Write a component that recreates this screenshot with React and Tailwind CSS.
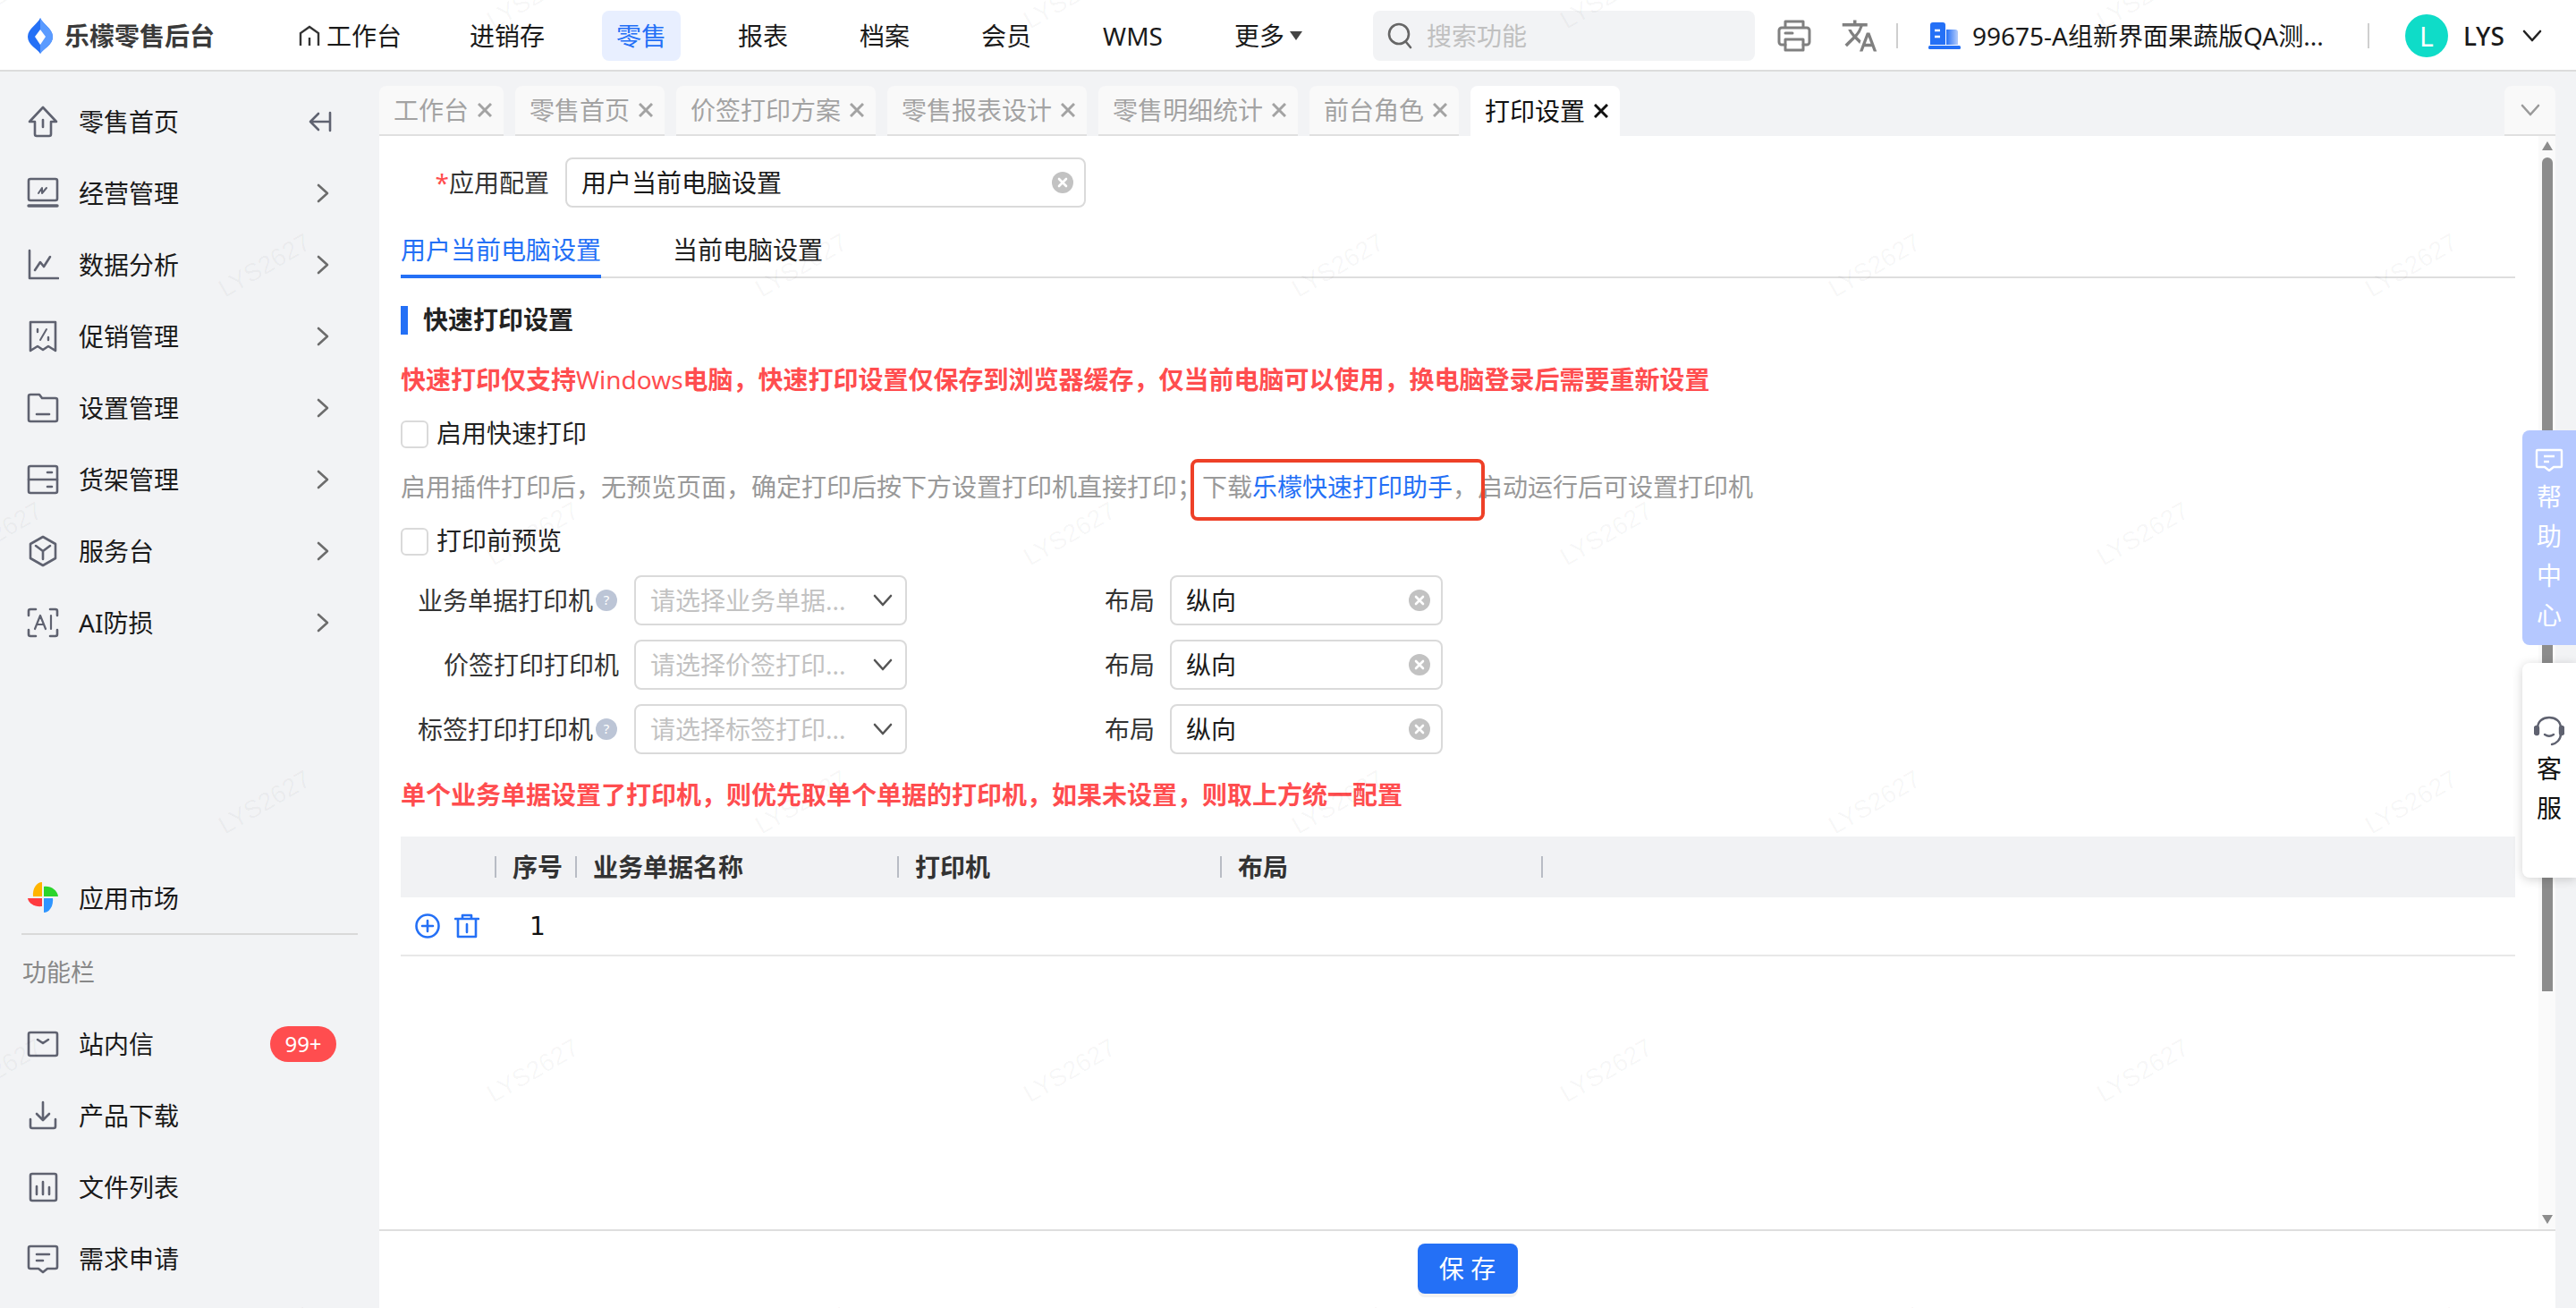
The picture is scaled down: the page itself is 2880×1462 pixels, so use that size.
import { MdTranslate } from 'react-icons/md'

const navItems = ['进销存', '零售', '报表', '档案', '会员', 'WMS']
const tabs = ['工作台', '零售首页', '价签打印方案', '零售报表设计', '零售明细统计', '前台角色']
const stroke = { fill: 'none', stroke: 'currentColor', strokeWidth: 2.6, strokeLinecap: 'round', strokeLinejoin: 'round' }

function Svg({ children, size = 36, className = 'text-[#5f6270]' }) {
  return (
    <svg width={size} height={size} viewBox="0 0 36 36" className={`shrink-0 ${className}`} {...stroke}>
      {children}
    </svg>
  )
}

const menuTop = [
  ['经营管理', <><rect x="2" y="2" width="32" height="24" rx="2" /><path d="M2 32h32" strokeWidth="3.4" /><path d="M13 18l4-6v6l5-6" strokeWidth="2" /></>],
  ['数据分析', <><path d="M3 2v31h32" /><path d="M9 24l6-9 4 5 7-11" /></>],
  ['促销管理', <><path d="M4 2h28v32l-8-5-6 4-6-4-8 5z" /><path d="M22 10l-7 12" strokeWidth="2" /><path d="M12 10v3M24 19v3" strokeWidth="2.4" /></>],
  ['设置管理', <><path d="M2 5a2 2 0 0 1 2-2h10l3 4h15a2 2 0 0 1 2 2v22a2 2 0 0 1-2 2H4a2 2 0 0 1-2-2z" /><path d="M11 25h14" /></>],
  ['货架管理', <><rect x="2" y="3" width="32" height="30" rx="2" /><path d="M2 18h32M23 10h5M23 26h5" /></>],
  ['服务台', <><path d="M18 2l14 8v16l-14 8-14-8V10z" /><path d="M10 12l8 6 8-6M18 18v9" /></>],
  ['AI防损', <><path d="M10 3H4a2 2 0 0 0-2 2v5M26 3h6a2 2 0 0 1 2 2v5M10 33H4a2 2 0 0 1-2-2v-5M26 33h6a2 2 0 0 0 2-2v-5" /><path d="M9 25l6-15 6 15M11 20h8M27 10v15" strokeWidth="2.2" /></>],
]

const menuBottom = [
  ['站内信', <><rect x="2" y="5" width="32" height="26" rx="2" /><path d="M12 13l6 4 6-4" /></>],
  ['产品下载', <><path d="M18 3v19M11 16l7 7 7-7" /><path d="M4 22v8a2 2 0 0 0 2 2h24a2 2 0 0 0 2-2v-8" /></>],
  ['文件列表', <><rect x="4" y="3" width="29" height="30" rx="2" /><path d="M11 17v9M18 12v14M25 18v8" /></>],
  ['需求申请', <><path d="M4 4h28a2 2 0 0 1 2 2v21a2 2 0 0 1-2 2h-9l-5 4-5-4H4a2 2 0 0 1-2-2V6a2 2 0 0 1 2-2z" /><path d="M11 13h14M11 20h7" /></>],
]

function Chevron() {
  return (
    <svg width="14" height="22" viewBox="0 0 14 22" className="shrink-0 text-[#6c6c6c]" {...stroke}>
      <path d="M2 2l10 9-10 9" />
    </svg>
  )
}

function ChevronDown({ className = 'text-[#555]' }) {
  return (
    <svg width="22" height="14" viewBox="0 0 22 14" className={`shrink-0 ${className}`} {...stroke}>
      <path d="M2 2l9 10 9-10" />
    </svg>
  )
}

function CloseX({ className }) {
  return (
    <svg width="16" height="16" viewBox="0 0 16 16" className={`shrink-0 ${className}`} fill="none" stroke="currentColor" strokeWidth="3">
      <path d="M1 1l14 14M15 1L1 15" />
    </svg>
  )
}

function ClearIcon() {
  return (
    <svg width="24" height="24" viewBox="0 0 24 24" className="shrink-0">
      <circle cx="12" cy="12" r="12" fill="#c2c2c2" />
      <path d="M8 8l8 8M16 8l-8 8" stroke="#fff" strokeWidth="2.6" strokeLinecap="round" />
    </svg>
  )
}

function MenuRow({ label, icon, right }) {
  return (
    <div className="flex h-[80px] items-center pl-[30px] pr-[56px]">
      <Svg>{icon}</Svg>
      <span className="ml-[22px] flex-1 text-[28px] text-[#1a1a1a]">{label}</span>
      {right}
    </div>
  )
}

function Sidebar() {
  return (
    <aside className="flex w-[424px] shrink-0 flex-col justify-between bg-[#f2f3f5] pt-[16px] pb-[15px]">
      <div>
        <MenuRow
          label="零售首页"
          icon={<><path d="M18 2L3 18h6v14a2 2 0 0 0 2 2h14a2 2 0 0 0 2-2V18h6z" /><path d="M18 16v8" /></>}
          right={
            <svg width="28" height="24" viewBox="0 0 28 24" className="mr-[-4px] shrink-0 text-[#5f6270]" {...stroke}>
              <path d="M12 3L3 12l9 9M3 12h21M25 2v20" />
            </svg>
          }
        />
        {menuTop.map(([label, icon]) => (
          <MenuRow key={label} label={label} icon={icon} right={<Chevron />} />
        ))}
      </div>
      <div>
        <div className="flex h-[56px] items-center pl-[30px]">
          <svg width="36" height="36" viewBox="0 0 36 36" className="shrink-0">
            <path d="M17 17H7C6 8 11 1 17 1z" fill="#ffb400" />
            <path d="M19 17V6c8-1 15 4 16 11z" fill="#2bd52b" />
            <path d="M19 19h10c1 9-4 16-10 16z" fill="#2f95ff" />
            <path d="M17 19v9C9 29 2 25 1 19z" fill="#ff3b3f" />
          </svg>
          <span className="ml-[22px] pt-[2px] text-[28px] text-[#1a1a1a]">应用市场</span>
        </div>
        <div className="mr-[24px] ml-[24px] mt-[12px] h-[2px] w-[376px] bg-[#d9d9d9]" />
        <div className="mt-[22px] pl-[25px] text-[27px] leading-[40px] text-[#888]">功能栏</div>
        <div className="mt-[20px]">
          {menuBottom.map(([label, icon]) => (
            <MenuRow
              key={label}
              label={label}
              icon={icon}
              right={
                label === '站内信' && (
                  <span className="mr-[-8px] flex h-[40px] w-[74px] items-center justify-center rounded-full bg-[#ff4d4f] text-[24px] text-white">
                    99+
                  </span>
                )
              }
            />
          ))}
        </div>
      </div>
    </aside>
  )
}

function Header() {
  return (
    <header className="flex h-[80px] shrink-0 items-center border-b-2 border-[#dcdcdc] bg-white pt-[2px] pl-[31px]">
      <svg width="28" height="40" viewBox="0 0 28 40" className="shrink-0">
        <path d="M14 0c2 6 14 12 14 21 0 9-10 13-14 19-4-6-14-10-14-19C0 12 12 6 14 0z" fill="#2470f6" />
        <path d="M14 0c2 6 14 12 14 21 0 9-10 13-14 19z" fill="#5a9bff" />
        <path d="M14 13l6 8-6 9-6-9z" fill="#fff" />
      </svg>
      <span className="ml-[13px] text-[28px] font-bold text-[#3a3a3a]">乐檬零售后台</span>

      <nav className="ml-[77px] flex items-center gap-12">
        <div className="flex h-14 items-center gap-[6px] rounded-lg pr-3 pl-4 text-[28px] text-[#1a1a1a]">
          <svg width="26" height="24" viewBox="0 0 26 24" className="shrink-0 text-[#333]" fill="none" stroke="currentColor" strokeWidth="2.4">
            <path d="M3 23V9l10-7 10 7v14M13 14v9" />
          </svg>
          工作台
        </div>
        {navItems.map((item) => (
          <div
            key={item}
            className={`flex h-14 items-center rounded-lg px-4 text-[28px] ${item === '零售' ? 'bg-[#e8efff] text-[#2470f6]' : 'text-[#1a1a1a]'}`}
          >
            {item}
          </div>
        ))}
        <div className="flex h-14 items-center gap-[6px] rounded-lg px-4 text-[28px] text-[#1a1a1a]">
          更多
          <svg width="14" height="10" viewBox="0 0 14 10" className="shrink-0">
            <path d="M0 0h14L7 10z" fill="#444" />
          </svg>
        </div>
      </nav>

      <div className="ml-[63px] flex h-14 w-[427px] shrink-0 items-center rounded-lg bg-[#f2f3f5] pl-4">
        <svg width="28" height="30" viewBox="0 0 28 30" className="shrink-0 text-[#666]" fill="none" stroke="currentColor" strokeWidth="2.6" strokeLinecap="round">
          <circle cx="13" cy="13" r="11" />
          <path d="M21 22l5 6" />
        </svg>
        <span className="ml-[16px] text-[28px] text-[#c0c0c0]">搜索功能</span>
      </div>

      <svg width="38" height="36" viewBox="0 0 38 36" className="ml-[25px] shrink-0 text-[#808080]" {...stroke} strokeWidth="3">
        <path d="M9 9V2h20v7M9 28H5a3 3 0 0 1-3-3V12a3 3 0 0 1 3-3h28a3 3 0 0 1 3 3v13a3 3 0 0 1-3 3h-4" />
        <path d="M9 22h20v12H9zM9 15h8" />
      </svg>
      <MdTranslate size={42} className="ml-[33px] shrink-0 text-[#808080]" />
      <div className="ml-[20px] h-[28px] w-[2px] shrink-0 bg-[#cfcfcf]" />
      <svg width="36" height="30" viewBox="0 0 36 30" className="ml-[34px] shrink-0">
        <defs>
          <linearGradient id="tower" x1="0" y1="0" x2="1" y2="0">
            <stop offset="0" stopColor="#2470f6" />
            <stop offset="1" stopColor="#b5cdfb" />
          </linearGradient>
        </defs>
        <path d="M20 8h10a3 3 0 0 1 3 3v14H20z" fill="url(#tower)" />
        <path d="M2 3a3 3 0 0 1 3-3h11a3 3 0 0 1 3 3v22H2z" fill="#2470f6" />
        <path d="M7 9h6M7 16h6" stroke="#fff" strokeWidth="2.4" />
        <rect x="0" y="26" width="36" height="4" rx="1.5" fill="#2470f6" />
      </svg>
      <span className="ml-[13px] w-[395px] shrink-0 whitespace-nowrap text-[28px] text-[#1a1a1a]">99675-A组新界面果蔬版QA测...</span>
      <div className="ml-[47px] h-[28px] w-[2px] shrink-0 bg-[#cfcfcf]" />
      <div className="ml-[40px] flex h-[48px] w-[48px] shrink-0 items-center justify-center rounded-full bg-[#0fdcc8] text-[30px] text-white">L</div>
      <span className="ml-[17px] text-[28px] font-medium text-[#1a1a1a]">LYS</span>
      <div className="ml-[20px]">
        <ChevronDown className="text-[#222]" />
      </div>
    </header>
  )
}

function TabBar() {
  return (
    <div className="flex h-[56px] shrink-0 justify-between pr-[23px]">
      <div className="flex gap-[13px]">
        {tabs.map((tab) => (
          <div key={tab} className="flex items-center gap-[10px] rounded-t-lg border-b-2 border-[#e0e0e0] bg-[#f9f9f9] pr-[13px] pl-4 text-[28px] text-[#a3a3a3]">
            {tab}
            <CloseX className="text-[#a3a3a3]" />
          </div>
        ))}
        <div className="flex items-center gap-[10px] rounded-t-lg bg-white pr-[13px] pl-4 text-[28px] text-[#111]">
          打印设置
          <CloseX className="text-[#111]" />
        </div>
      </div>
      <div className="flex w-[57px] items-center justify-center rounded-t-lg border-b-2 border-[#e0e0e0] bg-[#f9f9f9]">
        <ChevronDown className="text-[#9a9a9a]" />
      </div>
    </div>
  )
}

function SelectBox({ children, width, clear }) {
  return (
    <div className={`flex h-14 shrink-0 items-center justify-between rounded-lg border-2 border-[#dadada] bg-white pl-4 text-[28px] ${width} ${clear ? 'pr-[12px] text-[#1a1a1a]' : 'pr-[14px] text-[#c2c2c2]'}`}>
      <span className="whitespace-nowrap">{children}</span>
      {clear ? <ClearIcon /> : <ChevronDown />}
    </div>
  )
}

function Help() {
  return (
    <svg width="24" height="24" viewBox="0 0 24 24" className="mr-[2px] ml-[3px] shrink-0">
      <circle cx="12" cy="12" r="12" fill="#bcc5d6" />
      <text x="12" y="17" textAnchor="middle" fontSize="15" fill="#fff">?</text>
    </svg>
  )
}

function PrinterRow({ label, placeholder, help }) {
  return (
    <div className="flex items-center">
      <div className="flex w-[244px] shrink-0 items-center justify-end text-[28px] text-[#333]">
        {label}
        {help && <Help />}
      </div>
      <div className="ml-[17px]">
        <SelectBox width="w-[305px]">{placeholder}</SelectBox>
      </div>
      <span className="ml-[221px] w-[56px] shrink-0 text-[28px] text-[#333]">布局</span>
      <div className="ml-[17px]">
        <SelectBox width="w-[305px]" clear>纵向</SelectBox>
      </div>
    </div>
  )
}

function CheckRow({ label, className }) {
  return (
    <div className={`flex h-[31px] items-center ${className}`}>
      <div className="h-[31px] w-[31px] shrink-0 rounded-md border-2 border-[#dadada] bg-white" />
      <span className="mb-[4px] ml-[9px] text-[28px] text-[#222]">{label}</span>
    </div>
  )
}

function TableHead() {
  const cols = [
    ['', 'w-[107px]'],
    ['序号', 'w-[90px]'],
    ['业务单据名称', 'w-[360px]'],
    ['打印机', 'w-[361px]'],
    ['布局', 'w-[359px]'],
  ]
  return (
    <div className="flex h-[68px] items-center bg-[#f1f2f4] text-[28px] font-bold text-[#333]">
      {cols.map(([name, width], i) => (
        <div key={i} className={`flex h-[24px] shrink-0 items-center border-r-2 border-[#b8bcc4] pl-[18px] ${width}`}>
          {name}
        </div>
      ))}
    </div>
  )
}

function Scrollbar() {
  return (
    <div className="flex w-[19px] shrink-0 flex-col items-center bg-[#fafafa] pt-[6px] pb-[6px]">
      <svg width="12" height="10" viewBox="0 0 12 10" className="shrink-0">
        <path d="M0 10L6 0l6 10z" fill="#8c8c8c" />
      </svg>
      <div className="mt-[8px] h-[932px] w-[12px] shrink-0 rounded-t-full bg-[#8c8c8c]" />
      <div className="flex-1" />
      <svg width="12" height="10" viewBox="0 0 12 10" className="shrink-0">
        <path d="M0 0l6 10 6-10z" fill="#8c8c8c" />
      </svg>
    </div>
  )
}

function SideWidgets() {
  return (
    <>
      <div className="absolute top-[481px] right-0 flex h-[240px] w-[60px] flex-col items-center rounded-l-lg bg-[#b5c8ff] pt-[20px] text-[28px] leading-[44px] text-white">
        <svg width="32" height="26" viewBox="0 0 32 26" className="mb-[6px] shrink-0" fill="none" stroke="currentColor" strokeWidth="2.4" strokeLinejoin="round">
          <path d="M3 2h26a1 1 0 0 1 1 1v17a1 1 0 0 1-1 1h-8l-5 4-5-4H3a1 1 0 0 1-1-1V3a1 1 0 0 1 1-1z" />
          <path d="M10 9h12M10 15h6" />
        </svg>
        <span>帮</span>
        <span>助</span>
        <span>中</span>
        <span>心</span>
      </div>
      <div className="absolute top-[741px] right-0 flex h-[240px] w-[60px] flex-col items-center rounded-l-lg bg-white pt-[59px] text-[28px] leading-[44px] text-[#111] shadow-[0_2px_12px_rgba(0,0,0,0.18)]">
        <svg width="34" height="34" viewBox="0 0 34 34" className="shrink-0 text-[#5f6270]" fill="none" stroke="currentColor" strokeWidth="2.4" strokeLinecap="round">
          <path d="M4 14C4 6 10 2 17 2s13 4 13 12v6c0 7-5 11-10 12" />
          <rect x="1" y="12" width="4" height="9" rx="2" fill="currentColor" />
          <rect x="29" y="12" width="4" height="9" rx="2" fill="currentColor" />
          <path d="M12 21c3 2 7 2 10 0" />
        </svg>
        <span className="mt-[3px]">客</span>
        <span>服</span>
      </div>
    </>
  )
}

// 水印
function Watermarks() {
  const marks = []
  for (let row = 0; row < 6; row++) {
    for (let col = 0; col < 6; col++) {
      const x = (row % 2 ? 296 : 596) + (col - (row % 2 ? 0 : 1)) * 600
      marks.push({ x, y: -3 + row * 300 })
    }
  }
  return (
    <div className="pointer-events-none absolute inset-0 overflow-hidden">
      {marks.map((m) => (
        <span
          key={`${m.x}-${m.y}`}
          className="absolute -translate-x-1/2 -translate-y-1/2 rotate-[-30deg] whitespace-nowrap font-['Liberation_Sans'] text-[28px] text-black/[0.04]"
          style={{ left: m.x, top: m.y }}
        >
          LYS2627
        </span>
      ))}
    </div>
  )
}

export default function App() {
  return (
    <div className="relative flex h-[1462px] w-[2880px] flex-col overflow-hidden bg-[#f2f3f5] font-['Noto_Sans','Noto_Sans_CJK_SC',sans-serif]">
      <Header />
      <div className="flex min-h-0 flex-1">
        <Sidebar />
        <main className="flex min-w-0 flex-1 flex-col pt-4">
          <TabBar />
          <div className="mr-[23px] flex min-h-0 flex-1 bg-white">
            <div className="min-w-0 flex-1 pr-[26px] pl-6">
              <div className="mt-6 flex items-center">
                <div className="flex w-[166px] shrink-0 justify-end text-[28px] text-[#333]">
                  <span className="text-[#ff4d4f]">*</span>应用配置
                </div>
                <div className="ml-[18px]">
                  <SelectBox width="w-[582px]" clear>用户当前电脑设置</SelectBox>
                </div>
              </div>

              <div className="mt-[19px] flex h-[60px] gap-[80px] border-b-2 border-[#dedede] text-[28px] text-[#222]">
                <div className="flex h-[60px] items-center border-b-4 border-[#2470f6] text-[#2470f6]">用户当前电脑设置</div>
                <div className="flex h-[56px] items-center">当前电脑设置</div>
              </div>

              <div className="mt-[31px] flex h-[32px] items-center border-l-8 border-[#2470f6] pl-[17px] text-[28px] font-bold text-[#222]">
                <span className="mb-[3px]">快速打印设置</span>
              </div>

              <div className="mt-[30px] h-10 text-[28px] leading-10 font-bold text-[#ff4d4f]">
                快速打印仅支持<span className="font-normal">Windows</span>电脑，快速打印设置仅保存到浏览器缓存，仅当前电脑可以使用，换电脑登录后需要重新设置
              </div>

              <CheckRow label="启用快速打印" className="mt-[26px]" />

              <div className="relative mt-[23px] h-10 text-[28px] leading-10 text-[#999]">
                启用插件打印后，无预览页面，确定打印后按下方设置打印机直接打印；下载<span className="text-[#2470f6]">乐檬快速打印助手</span>，启动运行后可设置打印机
                <div className="absolute top-[-11px] left-[883px] h-[69px] w-[329px] rounded-lg border-4 border-[#ee4027]" />
              </div>

              <CheckRow label="打印前预览" className="mt-[26px]" />

              <div className="mt-[22px] flex flex-col gap-4">
                <PrinterRow label="业务单据打印机" placeholder="请选择业务单据..." help />
                <PrinterRow label="价签打印打印机" placeholder="请选择价签打印..." />
                <PrinterRow label="标签打印打印机" placeholder="请选择标签打印..." help />
              </div>

              <div className="mt-[25px] h-10 text-[28px] leading-10 font-bold text-[#ff4d4f]">
                单个业务单据设置了打印机，则优先取单个单据的打印机，如果未设置，则取上方统一配置
              </div>

              <div className="mt-[27px]">
                <TableHead />
                <div className="flex h-[66px] items-center border-b-2 border-[#e8e8e8] pl-4">
                  <svg width="28" height="28" viewBox="0 0 28 28" className="shrink-0 text-[#2470f6]" fill="none" stroke="currentColor" strokeWidth="2.6" strokeLinecap="round">
                    <circle cx="14" cy="14" r="12.5" />
                    <path d="M14 8v12M8 14h12" />
                  </svg>
                  <svg width="28" height="28" viewBox="0 0 28 28" className="ml-4 shrink-0 text-[#2470f6]" fill="none" stroke="currentColor" strokeWidth="2.6" strokeLinecap="round" strokeLinejoin="round">
                    <path d="M1 6h26M9 6V2h10v4M4 6v20h20V6M14 12v9" />
                  </svg>
                  <span className="mt-[2px] ml-[56px] font-['DejaVu_Sans'] text-[28px] text-[#111]">1</span>
                </div>
              </div>
            </div>
            <Scrollbar />
          </div>
          <div className="mr-[23px] flex h-[88px] shrink-0 justify-center border-t-2 border-[#dedede] bg-white pt-[14px]">
            <button className="h-14 w-[112px] rounded-lg bg-[#2470f6] text-[28px] text-white shadow-[0_4px_0_#f2f2f2]">保 存</button>
          </div>
        </main>
      </div>
      <SideWidgets />
      <Watermarks />
    </div>
  )
}
